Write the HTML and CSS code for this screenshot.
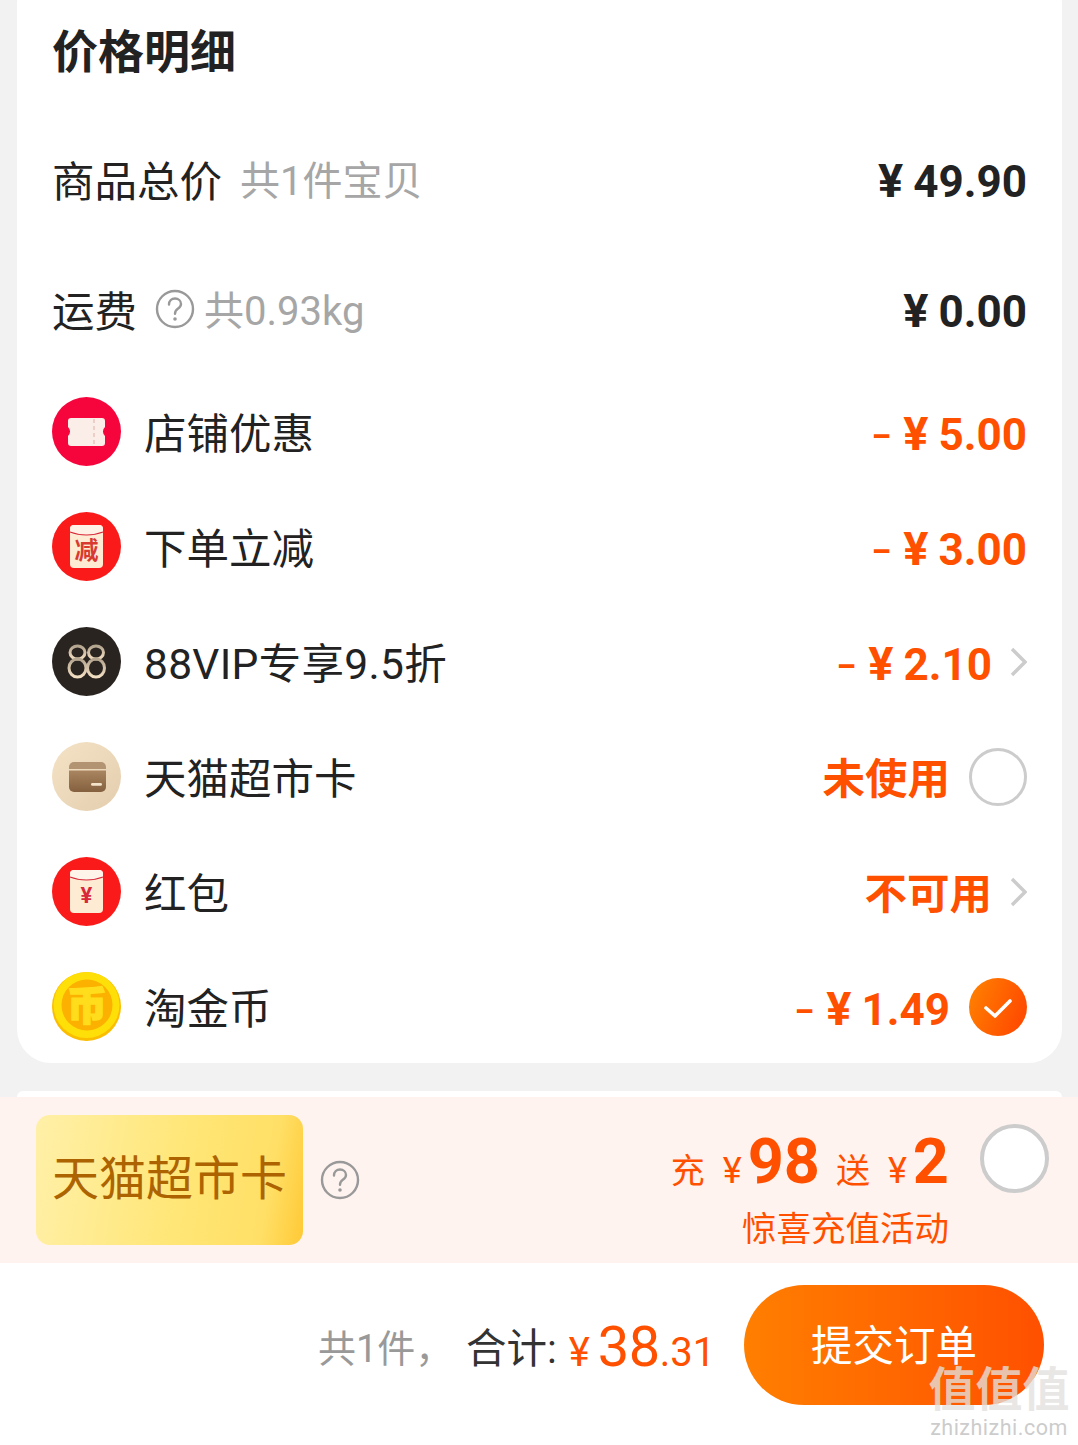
FILE: index.html
```html
<!DOCTYPE html>
<html lang="zh-CN">
<head>
    <meta charset="UTF-8">
    <meta name="viewport" content="width=device-width, initial-scale=1.0">
    <title>价格明细</title>
    <link rel="stylesheet" href="styles.css">
</head>
<body>
    <div class="page">
        <div class="card">
            <h1 class="card-title">价格明细</h1>

            <div class="row row-plain">
                <div class="row-left">
                    <span class="label">商品总价</span>
                    <span class="hint hint-total">共1件宝贝</span>
                </div>
                <div class="amount amount-dark"><span class="yen">¥</span>49.90</div>
            </div>

            <div class="row row-plain">
                <div class="row-left">
                    <span class="label">运费</span>
                    <svg class="help help-freight" viewBox="0 0 40 40">
                        <circle cx="20" cy="20" r="18" fill="none" stroke="#999" stroke-width="2.4"/>
                        <path d="M14 15.5c0-3.600 2.700-6 6-6s6 2.300 6 5.400c0 2.500-1.500 3.700-3.200 4.900-1.800 1.300-2.800 2.300-2.800 5" fill="none" stroke="#999" stroke-width="2.400" stroke-linecap="round"/>
                        <circle cx="20" cy="30" r="1.800" fill="#999"/>
                    </svg>
                    <span class="hint">共0.93kg</span>
                </div>
                <div class="amount amount-dark"><span class="yen">¥</span>0.00</div>
            </div>

            <div class="row">
                <div class="row-left">
                    <svg class="icon" viewBox="0 0 69 69">
                        <circle cx="34.500" cy="34.500" r="34.500" fill="#f5053c"/>
                        <path d="M19 21h31a3 3 0 0 1 3 3v6a6 6 0 0 0 0 9v7a3 3 0 0 1-3 3H19a3 3 0 0 1-3-3v-7a6 6 0 0 0 0-9v-6a3 3 0 0 1 3-3z" fill="#fbeee8"/>
                        <path d="M42 22v26" stroke="#ecd0c8" stroke-width="2" stroke-dasharray="4 3"/>
                    </svg>
                    <span class="label">店铺优惠</span>
                </div>
                <div class="amount"><span class="minus">–</span><span class="yen">¥</span>5.00</div>
            </div>

            <div class="row">
                <div class="row-left">
                    <svg class="icon" viewBox="0 0 69 69">
                        <circle cx="34.500" cy="34.500" r="34.500" fill="#fa1a1a"/>
                        <rect x="18" y="13" width="33" height="43" rx="4" fill="#fdebd3"/>
                        <path d="M18 17a4 4 0 0 1 4-4h25a4 4 0 0 1 4 4v3c-10 4-23 4-33 0z" fill="#fff1e6"/>
                        <path d="M18 20c10 4 23 4 33 0" fill="none" stroke="#d8283a" stroke-width="1.200"/>
                        <text class="icon-char" x="34.500" y="47" text-anchor="middle">减</text>
                    </svg>
                    <span class="label">下单立减</span>
                </div>
                <div class="amount"><span class="minus">–</span><span class="yen">¥</span>3.00</div>
            </div>

            <div class="row">
                <div class="row-left">
                    <svg class="icon" viewBox="0 0 69 69">
                        <defs>
                            <linearGradient id="vip" x1="0" y1="0" x2="0" y2="1">
                                <stop offset="0" stop-color="#b3a48e"/>
                                <stop offset="1" stop-color="#f3dfc2"/>
                            </linearGradient>
                        </defs>
                        <circle cx="34.500" cy="34.500" r="34.500" fill="#2a2421"/>
                        <g fill="none" stroke="url(#vip)" stroke-width="3">
                            <ellipse cx="25.500" cy="25.500" rx="7.500" ry="6.500"/>
                            <ellipse cx="25.500" cy="41" rx="8.500" ry="9"/>
                            <ellipse cx="44" cy="25.500" rx="7.500" ry="6.500"/>
                            <ellipse cx="44" cy="41" rx="8.500" ry="9"/>
                        </g>
                    </svg>
                    <span class="label label-latin">88VIP专享9.5折</span>
                </div>
                <div class="row-right">
                    <div class="amount"><span class="minus">–</span><span class="yen">¥</span>2.10</div>
                    <svg class="chevron" viewBox="0 0 17 30"><path d="M2 2l13 13L2 28" fill="none" stroke="#ccc" stroke-width="3.400"/></svg>
                </div>
            </div>

            <div class="row">
                <div class="row-left">
                    <svg class="icon" viewBox="0 0 69 69">
                        <defs>
                            <linearGradient id="beige" x1="0" y1="0" x2="1" y2="1">
                                <stop offset="0" stop-color="#f5e3c6"/>
                                <stop offset="1" stop-color="#e3cdae"/>
                            </linearGradient>
                            <linearGradient id="wallet" x1="0" y1="0" x2="0" y2="1">
                                <stop offset="0" stop-color="#a98560"/>
                                <stop offset="1" stop-color="#85603f"/>
                            </linearGradient>
                        </defs>
                        <circle cx="34.500" cy="34.500" r="34.500" fill="url(#beige)"/>
                        <path d="M17 27v-2a5 5 0 0 1 5-5h27a5 5 0 0 1 5 5v2z" fill="#b39472"/>
                        <path d="M17 28.500h37V45a5 5 0 0 1-5 5H22a5 5 0 0 1-5-5z" fill="url(#wallet)"/>
                        <rect x="39" y="41" width="11" height="2.800" rx="1.400" fill="#f3e3cb"/>
                    </svg>
                    <span class="label">天猫超市卡</span>
                </div>
                <div class="row-right">
                    <div class="amount amount-cjk">未使用</div>
                    <span class="radio"></span>
                </div>
            </div>

            <div class="row">
                <div class="row-left">
                    <svg class="icon" viewBox="0 0 69 69">
                        <circle cx="34.500" cy="34.500" r="34.500" fill="#fa1a1a"/>
                        <rect x="18" y="13" width="33" height="43" rx="4" fill="#fdebd3"/>
                        <path d="M18 17a4 4 0 0 1 4-4h25a4 4 0 0 1 4 4v3c-10 4-23 4-33 0z" fill="#fff4ea"/>
                        <path d="M18 20c10 4 23 4 33 0" fill="none" stroke="#d8283a" stroke-width="1.200"/>
                        <text class="icon-yen" x="34.500" y="46" text-anchor="middle">¥</text>
                    </svg>
                    <span class="label">红包</span>
                </div>
                <div class="row-right">
                    <div class="amount amount-cjk">不可用</div>
                    <svg class="chevron" viewBox="0 0 17 30"><path d="M2 2l13 13L2 28" fill="none" stroke="#ccc" stroke-width="3.400"/></svg>
                </div>
            </div>

            <div class="row">
                <div class="row-left">
                    <svg class="icon" viewBox="0 0 69 69">
                        <circle cx="34.500" cy="34.500" r="34.500" fill="#fbbd00"/>
                        <circle cx="34.500" cy="33" r="33" fill="#ffdf08"/>
                        <circle cx="35" cy="33" r="25.500" fill="#fcb000"/>
                        <text class="icon-coin" x="35" y="47.500" text-anchor="middle">币</text>
                    </svg>
                    <span class="label">淘金币</span>
                </div>
                <div class="row-right">
                    <div class="amount"><span class="minus">–</span><span class="yen">¥</span>1.49</div>
                    <svg class="check" viewBox="0 0 58 58">
                        <defs>
                            <linearGradient id="checkfill" x1="0" y1="0" x2="1" y2="0.400">
                                <stop offset="0" stop-color="#ff8400"/>
                                <stop offset="1" stop-color="#ff4d00"/>
                            </linearGradient>
                        </defs>
                        <circle cx="29" cy="29" r="29" fill="url(#checkfill)"/>
                        <path d="M17 30l9 8 15-15" fill="none" stroke="#fff" stroke-width="3.600" stroke-linecap="round" stroke-linejoin="round"/>
                    </svg>
                </div>
            </div>
        </div>

        <div class="next-card"></div>

        <div class="promo">
            <div class="promo-left">
                <div class="promo-tag">天猫超市卡</div>
                <svg class="help" viewBox="0 0 40 40">
                    <circle cx="20" cy="20" r="18" fill="none" stroke="#999" stroke-width="2.400"/>
                    <path d="M14 15.500c0-3.600 2.700-6 6-6s6 2.300 6 5.400c0 2.500-1.500 3.700-3.200 4.900-1.800 1.300-2.800 2.300-2.800 5" fill="none" stroke="#999" stroke-width="2.400" stroke-linecap="round"/>
                    <circle cx="20" cy="30" r="1.800" fill="#999"/>
                </svg>
            </div>
            <div class="promo-right">
                <div class="promo-offer">
                    <span class="offer-word">充</span>
                    <span class="offer-yen">¥</span>
                    <span class="offer-num">98</span>
                    <span class="offer-word offer-second">送</span>
                    <span class="offer-yen">¥</span>
                    <span class="offer-num">2</span>
                </div>
                <div class="promo-note">惊喜充值活动</div>
            </div>
            <span class="radio radio-big"></span>
        </div>

        <div class="footer">
            <span class="count">共1件，</span>
            <span class="total-label">合计:</span>
            <span class="total-price"><span class="total-yen">¥</span><span class="total-int">38</span><span class="total-dec">.31</span></span>
            <div class="submit">提交订单</div>
        </div>

        <div class="watermark">
            <div class="watermark-big">值值值</div>
            <div class="watermark-small">zhizhizhi.com</div>
        </div>
    </div>
</body>
</html>
```

FILE: styles.css
```css
* {
    box-sizing: border-box;
}
html, body {
    margin: 0;
    padding: 0;
}
body {
    font-family: "Roboto", "Noto Sans CJK SC", sans-serif;
    color: #222;
    background-color: #f2f2f2;
}
.page {
    position: relative;
    width: 1078px;
    height: 1445px;
    overflow: hidden;
}
.card {
    height: 1093px;
    margin: -30px 16px 0 17px;
    padding: 30px 35px 0 35px;
    background-color: #fff;
    border-radius: 34px;
}
.card-title {
    height: 114.500px;
    margin: 0;
    font-size: 46px;
    line-height: 104px;
    font-weight: 700;
    color: #222;
}
.row {
    display: flex;
    align-items: center;
    justify-content: space-between;
    height: 115px;
}
.row-plain {
    height: 129.750px;
}
.row-left,
.row-right {
    display: flex;
    align-items: center;
}
.label {
    padding-bottom: 2px;
    font-size: 42.500px;
    font-weight: 400;
    color: #222;
}
.label-latin {
    letter-spacing: 0.300px;
}
.icon {
    width: 69px;
    height: 69px;
    margin-right: 23px;
    flex: none;
}
.icon-char {
    font-size: 24px;
    font-weight: 700;
    fill: #d83a32;
}
.icon-yen {
    font-size: 22px;
    font-weight: 700;
    fill: #d8283a;
}
.icon-coin {
    font-size: 40px;
    font-weight: 900;
    fill: #ffdc1c;
    stroke: #ffdc1c;
    stroke-width: 1.500px;
}
.hint {
    padding-bottom: 2px;
    font-size: 40px;
    color: #a6a6a6;
}
.hint-total {
    margin-left: 18px;
}
.help {
    width: 40px;
    height: 40px;
    flex: none;
}
.help-freight {
    margin: 0 9px 0 18px;
}
.amount {
    padding-top: 3px;
    font-size: 44px;
    font-weight: 700;
    color: #ff5000;
    white-space: nowrap;
}
.amount-dark {
    color: #222;
}
.amount-cjk {
    padding: 0 0 3px;
    font-size: 42.500px;
}
.yen {
    margin-right: 10px;
    font-size: 47px;
}
.minus {
    margin-right: 13px;
    font-size: 30px;
    font-weight: 900;
    vertical-align: 4px;
}
.chevron {
    width: 17px;
    height: 30px;
    margin-left: 18px;
}
.radio {
    display: block;
    width: 58px;
    height: 58px;
    margin-left: 19px;
    background-color: #fff;
    border: 3px solid #ccc;
    border-radius: 50%;
}
.check {
    width: 58px;
    height: 58px;
    margin-left: 19px;
}
.next-card {
    height: 6px;
    margin: 28px 16px 0 17px;
    background-color: #fff;
    border-radius: 30px 30px 0 0;
}
.promo {
    display: flex;
    align-items: center;
    height: 166px;
    padding: 0 29px 0 36px;
    background-color: #fff3ef;
}
.promo-left {
    display: flex;
    align-items: center;
    flex: 1;
}
.promo-tag {
    width: 267px;
    height: 130px;
    margin-right: 17px;
    font-size: 47px;
    line-height: 128px;
    text-align: center;
    color: #ad6400;
    background: linear-gradient(100deg, #fff0a8 0%, #ffe676 55%, #ffdf66 85%, #ffc935 100%);
    border-radius: 14px;
}
.promo-right {
    display: flex;
    flex-direction: column;
    align-items: flex-end;
    padding-top: 20px;
    color: #ff5000;
}
.promo-offer {
    display: flex;
    align-items: baseline;
    height: 70px;
}
.offer-word {
    font-size: 34px;
}
.offer-second {
    margin-left: 16px;
}
.offer-yen {
    margin-left: 18px;
    font-size: 36px;
}
.offer-num {
    margin-left: 6px;
    font-size: 63px;
    font-weight: 700;
    line-height: 70px;
}
.promo-note {
    margin-top: 8px;
    font-size: 34.500px;
    line-height: 48px;
}
.radio-big {
    width: 69px;
    height: 69px;
    margin: -44px 0 0 31px;
    border-width: 4px;
}
.footer {
    display: flex;
    align-items: center;
    height: 182px;
    padding: 0 34px 18px 318px;
    background-color: #fff;
}
.count {
    width: 148px;
    font-size: 38px;
    color: #999;
}
.total-label {
    font-size: 40.500px;
    color: #333;
}
.total-price {
    margin-left: 12px;
    padding-top: 4px;
    color: #ff5000;
    white-space: nowrap;
}
.total-yen {
    margin-right: 8px;
    font-size: 40px;
}
.total-int {
    font-size: 56px;
    letter-spacing: -0.500px;
}
.total-dec {
    font-size: 40px;
}
.submit {
    width: 300px;
    height: 120px;
    margin-left: auto;
    font-size: 41.500px;
    line-height: 124px;
    text-align: center;
    color: #fff;
    background: linear-gradient(90deg, #ff7f00, #ff5000);
    border-radius: 60px;
}
.watermark {
    position: absolute;
    right: 8px;
    bottom: 6px;
    width: 142px;
    text-align: center;
}
.watermark-big {
    font-size: 47px;
    font-weight: 700;
    line-height: 54px;
    color: rgba(228, 225, 222, 0.78);
}
.watermark-small {
    font-size: 21.500px;
    line-height: 22px;
    letter-spacing: 0.500px;
    color: rgba(190, 190, 190, 0.8);
}
```
